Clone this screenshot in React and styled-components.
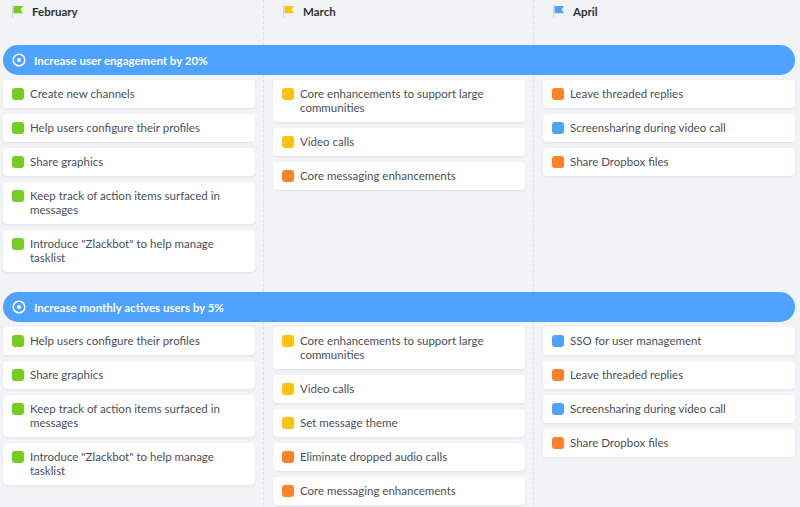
import React from 'react';
import styled, { createGlobalStyle } from 'styled-components';

const GlobalStyle = createGlobalStyle`
  html, body {
    margin: 0;
    padding: 0;
    background: #f1f3f6;
    overflow: hidden;
  }
  body {
    font-family: Lato, "Open Sans", sans-serif;
  }
`;

const COLORS = {
  green: '#77cc22',
  yellow: '#ffc30f',
  orange: '#ff8228',
  blue: '#4da3ff',
};

const months = [
  { name: 'February', color: COLORS.green, pad: 18 },
  { name: 'March', color: COLORS.yellow, pad: 19 },
  { name: 'April', color: COLORS.blue, pad: 19 },
];

const goals = [
  {
    title: 'Increase user engagement by 20%',
    lanes: [
      [
        ['green', 'Create new channels'],
        ['green', 'Help users configure their profiles'],
        ['green', 'Share graphics'],
        ['green', 'Keep track of action items surfaced in messages'],
        ['green', 'Introduce "Zlackbot" to help manage tasklist'],
      ],
      [
        ['yellow', 'Core enhancements to support large communities'],
        ['yellow', 'Video calls'],
        ['orange', 'Core messaging enhancements'],
      ],
      [
        ['orange', 'Leave threaded replies'],
        ['blue', 'Screensharing during video call'],
        ['orange', 'Share Dropbox files'],
      ],
    ],
  },
  {
    title: 'Increase monthly actives users by 5%',
    lanes: [
      [
        ['green', 'Help users configure their profiles'],
        ['green', 'Share graphics'],
        ['green', 'Keep track of action items surfaced in messages'],
        ['green', 'Introduce "Zlackbot" to help manage tasklist'],
      ],
      [
        ['yellow', 'Core enhancements to support large communities'],
        ['yellow', 'Video calls'],
        ['yellow', 'Set message theme'],
        ['orange', 'Eliminate dropped audio calls'],
        ['orange', 'Core messaging enhancements'],
      ],
      [
        ['blue', 'SSO for user management'],
        ['orange', 'Leave threaded replies'],
        ['blue', 'Screensharing during video call'],
        ['orange', 'Share Dropbox files'],
      ],
    ],
  },
];

const Board = styled.div`
  width: 810px;
  margin-left: -6px;
`;

const Columns = styled.div`
  display: grid;
  grid-template-columns: repeat(3, 270px);
`;

const HeaderCell = styled.div`
  height: 45px;
  box-sizing: border-box;
  padding: 5px 0 0 ${(p) => p.$pad}px;
  display: flex;
  align-items: flex-start;
  gap: 8px;
  border-right: ${(p) => (p.$last ? 'none' : '1px dashed #dde1e6')};
`;

const MonthName = styled.span`
  font-size: 11.5px;
  font-weight: 700;
  color: #2e3236;
  line-height: 13px;
  margin-top: 0px;
`;

const Banner = styled.div`
  height: 30px;
  margin: 0 9px;
  border-radius: 15px;
  background: #4da3ff;
  display: flex;
  align-items: center;
  gap: 8px;
  padding-left: 9px;
  color: #fff;
  font-size: 11.5px;
  font-weight: 700;
`;

const Lane = styled.div`
  box-sizing: border-box;
  padding: 5px 9px 20px 9px;
  display: flex;
  flex-direction: column;
  gap: 6px;
  border-right: ${(p) => (p.$last ? 'none' : '1px dashed #dde1e6')};
`;

const Card = styled.div`
  width: 252px;
  box-sizing: border-box;
  background: #fff;
  border-radius: 4px;
  box-shadow: 0 1px 2px rgba(40, 50, 70, 0.08);
  padding: 7px 10px 7px 9px;
  display: flex;
  align-items: flex-start;
  gap: 6px;
`;

const Swatch = styled.span`
  flex: 0 0 12px;
  width: 12px;
  height: 12px;
  margin-top: 1px;
  border-radius: 3px;
  background: ${(p) => p.$color};
`;

const CardText = styled.span`
  font-size: 11.5px;
  line-height: 14px;
  color: #4b5056;
`;

const Flag = ({ color }) => (
  <svg width="12" height="14" viewBox="0 0 12 14">
    <rect x="0" y="0" width="1.2" height="13" fill="#d5d9de" />
    <path d="M1.5 1 H11 L8.6 4.6 L11 8.2 H1.5 Z" fill={color} />
  </svg>
);

const Target = () => (
  <svg width="14" height="14" viewBox="0 0 14 14">
    <circle cx="7" cy="7" r="5.8" fill="none" stroke="#fff" strokeWidth="1.5" />
    <circle cx="7" cy="7" r="2" fill="#fff" />
  </svg>
);

export default function App() {
  return (
    <>
      <GlobalStyle />
      <Board>
        <Columns>
          {months.map((m, i) => (
            <HeaderCell key={m.name} $pad={m.pad} $last={i === months.length - 1}>
              <Flag color={m.color} />
              <MonthName>{m.name}</MonthName>
            </HeaderCell>
          ))}
        </Columns>
        {goals.map((g) => (
          <section key={g.title}>
            <Banner>
              <Target />
              {g.title}
            </Banner>
            <Columns>
              {g.lanes.map((lane, i) => (
                <Lane key={i} $last={i === g.lanes.length - 1}>
                  {lane.map(([c, text], j) => (
                    <Card key={j}>
                      <Swatch $color={COLORS[c]} />
                      <CardText>{text}</CardText>
                    </Card>
                  ))}
                </Lane>
              ))}
            </Columns>
          </section>
        ))}
      </Board>
    </>
  );
}
